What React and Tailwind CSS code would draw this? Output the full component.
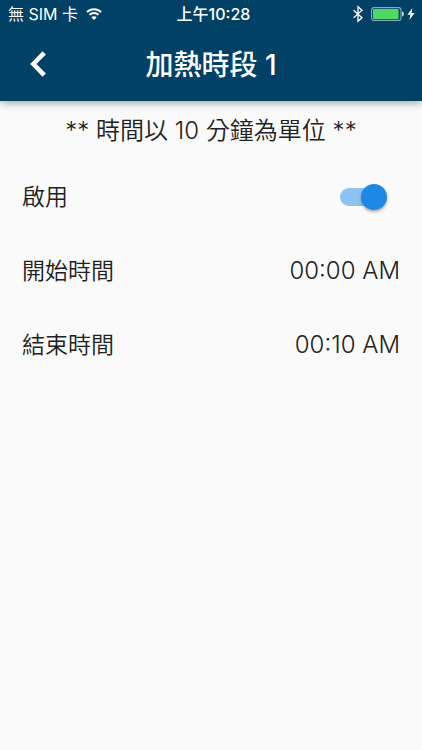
import { useState } from 'react';

function WifiIcon() {
  return (
    <svg viewBox="0 0 16 12" className="h-3 w-4" fill="none" stroke="currentColor" strokeWidth="1.9" aria-hidden="true">
      <path d="M0.9 4.1C4.9 0.2 11.1 0.2 15.1 4.1" />
      <path d="M3.5 6.8C6 4.4 10 4.4 12.5 6.8" />
      <path d="M8 11.9L5.3 9.2C6.8 7.8 9.2 7.8 10.7 9.2Z" fill="currentColor" stroke="none" />
    </svg>
  );
}

function BluetoothIcon() {
  return (
    <svg viewBox="0 0 10 18" className="h-[18px] w-[10px]" fill="none" stroke="currentColor" strokeWidth="1.3" aria-hidden="true">
      <path d="M0.6 5.2L9 12.8L5 16.3V1.7L9 5.2L0.6 12.8" />
    </svg>
  );
}

function BatteryIcon() {
  return (
    <svg viewBox="0 0 34 14" className="h-[14px] w-[34px]" aria-hidden="true">
      <rect x="0.6" y="0.6" width="29.4" height="12.8" rx="2.4" fill="none" stroke="#8aa9bd" strokeWidth="1.1" />
      <rect x="2" y="2" width="25.6" height="10" rx="1" fill="#4cd964" />
      <path d="M31.2 4.6C33.2 5.2 33.2 8.8 31.2 9.4Z" fill="#fff" />
    </svg>
  );
}

function BoltIcon() {
  return (
    <svg viewBox="0 0 8 12" className="h-3 w-2" fill="currentColor" aria-hidden="true">
      <path d="M5.4 0L0.4 6.8H3.4L2.4 12L7.6 5H4.5Z" />
    </svg>
  );
}

function StatusBar() {
  return (
    <div className="grid h-7 grid-cols-[1fr_auto_1fr] items-center pr-[7px] pl-2 text-base">
      <div className="flex items-center gap-2">
        <span>無 SIM 卡</span>
        <WifiIcon />
      </div>
      <span className="pl-1 font-medium">上午10:28</span>
      <div className="flex items-center justify-end">
        <BluetoothIcon />
        <span className="mr-[2px] ml-2"><BatteryIcon /></span>
        <BoltIcon />
      </div>
    </div>
  );
}

function TimeRow({ label, value }) {
  return (
    <button type="button" className="flex h-[74px] w-full items-center justify-between text-left">
      <span className="text-[23px]">{label}</span>
      <span className="text-2xl">{value}</span>
    </button>
  );
}

export default function App() {
  const [enabled, setEnabled] = useState(true);
  return (
    <div className="min-h-screen bg-[#fafafa] font-['Inter','Noto_Sans_CJK_TC',sans-serif] text-[#212121]">
      <header className="bg-[#004165] pb-px text-white shadow-[0_2px_8px_rgba(0,0,0,0.35)]">
        <StatusBar />
        <div className="grid h-[72px] grid-cols-[75px_1fr_75px] items-center">
          <button type="button" aria-label="返回" className="flex h-full items-center justify-center">
            <svg viewBox="0 0 16 26" className="h-[26px] w-4" fill="none" stroke="currentColor" strokeWidth="4.6" aria-hidden="true">
              <path d="M14.2 1.8L3.4 13L14.2 24.2" />
            </svg>
          </button>
          <h1 className="pt-px text-center text-[28px] font-[550]">加熱時段 1</h1>
        </div>
      </header>
      <main className="px-[22px] text-2xl font-[350]">
        <p className="flex h-[59px] items-center justify-center">** 時間以 10 分鐘為單位 **</p>
        <label className="flex h-[74px] items-center justify-between">
          <span className="text-[23px]">啟用</span>
          <input
            type="checkbox"
            role="switch"
            checked={enabled}
            onChange={(e) => setEnabled(e.target.checked)}
            className="mr-[13px] flex h-[18px] w-[47px] appearance-none items-center rounded-full bg-linear-to-r from-[#8ec2f2] from-90% to-transparent to-90% before:block before:size-[26px] before:shrink-0 before:rounded-full before:bg-[#1e88e5] before:shadow-[0_2px_3px_rgba(0,0,0,0.3)] before:content-[''] checked:justify-end"
          />
        </label>
        <TimeRow label="開始時間" value="00:00 AM" />
        <TimeRow label="結束時間" value="00:10 AM" />
      </main>
    </div>
  );
}
